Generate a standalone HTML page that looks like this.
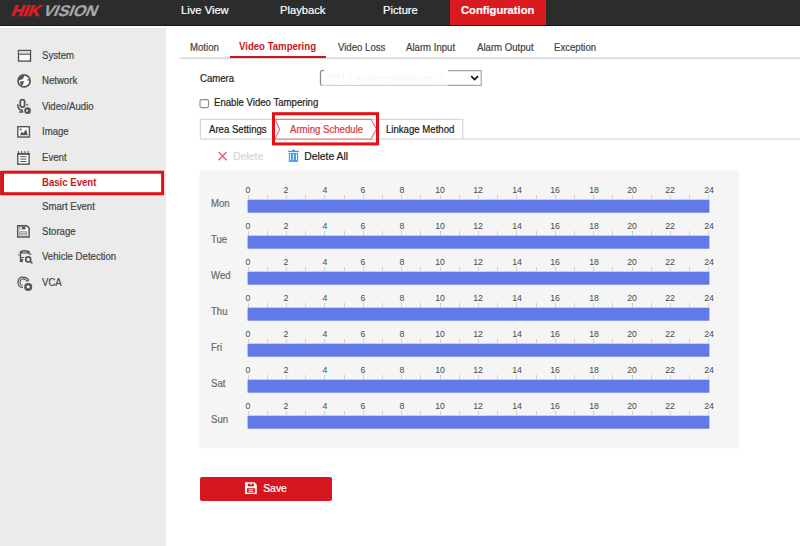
<!DOCTYPE html>
<html><head><meta charset="utf-8">
<style>
*{margin:0;padding:0;box-sizing:border-box}
html,body{width:800px;height:546px;overflow:hidden;background:#fff;font-family:"Liberation Sans",sans-serif;position:relative}
.abs{position:absolute}
.t{position:absolute;line-height:1;white-space:nowrap;-webkit-text-stroke:0.2px currentColor}
#hdr{position:absolute;left:0;top:0;width:800px;height:26px;background:#2c2c2c;border-bottom:1px solid #151515}
#logo{position:absolute;left:11px;top:0px;font-size:15.4px;line-height:21px;font-weight:bold;font-style:italic;white-space:nowrap}
#side{position:absolute;left:0;top:28px;width:166px;height:518px;background:#ebebeb}
.num{position:absolute;width:30px;text-align:center;font-size:9.5px;line-height:1;color:#4a4a4a;transform:scaleX(0.92)}
.tick{position:absolute;width:1px;height:4px;background:#d0d0d0}
.bar{position:absolute;left:247.5px;width:462px;height:13px;background:#6279e8}
svg{position:absolute;overflow:visible}
</style></head><body>
<div id="hdr">
  <div class="t" style="left:10.5px;top:2.6px;font-size:15.4px;font-weight:bold;color:#e31b23;transform:skewX(-22deg) scaleX(1.08);transform-origin:0 11px;-webkit-text-stroke:0.6px #e31b23">HIK</div>
  <div class="t" style="left:42.6px;top:2.6px;font-size:15.4px;font-weight:bold;color:#a8a8a8;transform:skewX(-22deg) scaleX(1.03);transform-origin:0 11px">VISION</div>
  <div class="abs" style="left:450px;top:0;width:96px;height:25px;background:#d91a21"></div>
<div class="t" style="left:181px;top:5px;font-size:11.2px;color:#fff;">Live View</div>
<div class="t" style="left:280px;top:5px;font-size:11.2px;color:#fff;">Playback</div>
<div class="t" style="left:383px;top:5px;font-size:11.2px;color:#fff;">Picture</div>
<div class="t" style="left:461px;top:5px;font-size:11.2px;color:#fff;font-weight:bold">Configuration</div>
</div>
<div id="side"></div>
<svg width="800" height="546" style="left:0;top:0"><rect x="2.5" y="172.2" width="160.1" height="21.5" fill="#fff" stroke="#e60f14" stroke-width="3"/><rect x="0" y="171" width="1.1" height="24" fill="#c42a30"/></svg>
<div class="t" style="left:41.5px;top:51px;font-size:10.0px;color:#444;transform:scaleX(0.9600);transform-origin:0 0;">System</div>
<div class="t" style="left:41.5px;top:76px;font-size:10.0px;color:#444;transform:scaleX(0.9600);transform-origin:0 0;">Network</div>
<div class="t" style="left:41.5px;top:102px;font-size:10.0px;color:#444;transform:scaleX(0.9600);transform-origin:0 0;">Video/Audio</div>
<div class="t" style="left:41.5px;top:127px;font-size:10.0px;color:#444;transform:scaleX(0.9600);transform-origin:0 0;">Image</div>
<div class="t" style="left:41.5px;top:153px;font-size:10.0px;color:#444;transform:scaleX(0.9600);transform-origin:0 0;">Event</div>
<div class="t" style="left:41.5px;top:178px;font-size:10.0px;color:#c8171e;transform:scaleX(0.9600);transform-origin:0 0;font-weight:bold;-webkit-text-stroke:0">Basic Event</div>
<div class="t" style="left:41.5px;top:202px;font-size:10.0px;color:#444;transform:scaleX(0.9600);transform-origin:0 0;">Smart Event</div>
<div class="t" style="left:41.5px;top:227px;font-size:10.0px;color:#444;transform:scaleX(0.9600);transform-origin:0 0;">Storage</div>
<div class="t" style="left:41.5px;top:252px;font-size:10.0px;color:#444;transform:scaleX(0.9600);transform-origin:0 0;">Vehicle Detection</div>
<div class="t" style="left:41.5px;top:278px;font-size:10.0px;color:#444;transform:scaleX(0.9600);transform-origin:0 0;">VCA</div>

<!-- subtabs -->
<svg width="800" height="546" style="left:0;top:0"><path d="M179.5 58.3 H800" stroke="#d6d6d6" stroke-width="1.4"/></svg>
<div class="abs" style="left:230px;top:56px;width:96px;height:2px;background:#c8171e"></div>

<svg width="800" height="546" style="left:0;top:0"><rect x="200" y="99.6" width="8.5" height="8" rx="1.6" fill="#fff" stroke="#8a8a8a" stroke-width="1.1"/></svg>

<!-- tabs -->
<svg width="800" height="546" style="left:0;top:0"><path d="M200.4 139 V119.3 H462.8 V139" fill="none" stroke="#d8d8d8" stroke-width="1.2"/><path d="M200 139.2 H800" stroke="#d8d8d8" stroke-width="1.3"/></svg>


<svg width="800" height="546" style="left:0;top:0"><rect x="199.5" y="170.5" width="539.5" height="278" fill="#f5f5f5"/></svg>
<div class="t" style="left:210.5px;top:199px;font-size:10.0px;color:#6a6a6a;transform:scaleX(0.9600);transform-origin:0 0;">Mon</div>
<div class="num" style="left:233.0px;top:185px">0</div>
<div class="num" style="left:271.4px;top:185px">2</div>
<div class="num" style="left:309.8px;top:185px">4</div>
<div class="num" style="left:348.2px;top:185px">6</div>
<div class="num" style="left:386.6px;top:185px">8</div>
<div class="num" style="left:425.0px;top:185px">10</div>
<div class="num" style="left:463.4px;top:185px">12</div>
<div class="num" style="left:501.8px;top:185px">14</div>
<div class="num" style="left:540.2px;top:185px">16</div>
<div class="num" style="left:578.6px;top:185px">18</div>
<div class="num" style="left:617.0px;top:185px">20</div>
<div class="num" style="left:655.4px;top:185px">22</div>
<div class="num" style="left:693.8px;top:185px">24</div>
<div class="tick" style="left:248px;top:195px"></div>
<div class="tick" style="left:267px;top:195px"></div>
<div class="tick" style="left:286px;top:195px"></div>
<div class="tick" style="left:305px;top:195px"></div>
<div class="tick" style="left:324px;top:195px"></div>
<div class="tick" style="left:344px;top:195px"></div>
<div class="tick" style="left:363px;top:195px"></div>
<div class="tick" style="left:382px;top:195px"></div>
<div class="tick" style="left:401px;top:195px"></div>
<div class="tick" style="left:420px;top:195px"></div>
<div class="tick" style="left:440px;top:195px"></div>
<div class="tick" style="left:459px;top:195px"></div>
<div class="tick" style="left:478px;top:195px"></div>
<div class="tick" style="left:497px;top:195px"></div>
<div class="tick" style="left:516px;top:195px"></div>
<div class="tick" style="left:536px;top:195px"></div>
<div class="tick" style="left:555px;top:195px"></div>
<div class="tick" style="left:574px;top:195px"></div>
<div class="tick" style="left:593px;top:195px"></div>
<div class="tick" style="left:612px;top:195px"></div>
<div class="tick" style="left:632px;top:195px"></div>
<div class="tick" style="left:651px;top:195px"></div>
<div class="tick" style="left:670px;top:195px"></div>
<div class="tick" style="left:689px;top:195px"></div>
<div class="tick" style="left:708px;top:195px"></div>
<div class="t" style="left:210.5px;top:235px;font-size:10.0px;color:#6a6a6a;transform:scaleX(0.9600);transform-origin:0 0;">Tue</div>
<div class="num" style="left:233.0px;top:221px">0</div>
<div class="num" style="left:271.4px;top:221px">2</div>
<div class="num" style="left:309.8px;top:221px">4</div>
<div class="num" style="left:348.2px;top:221px">6</div>
<div class="num" style="left:386.6px;top:221px">8</div>
<div class="num" style="left:425.0px;top:221px">10</div>
<div class="num" style="left:463.4px;top:221px">12</div>
<div class="num" style="left:501.8px;top:221px">14</div>
<div class="num" style="left:540.2px;top:221px">16</div>
<div class="num" style="left:578.6px;top:221px">18</div>
<div class="num" style="left:617.0px;top:221px">20</div>
<div class="num" style="left:655.4px;top:221px">22</div>
<div class="num" style="left:693.8px;top:221px">24</div>
<div class="tick" style="left:248px;top:231px"></div>
<div class="tick" style="left:267px;top:231px"></div>
<div class="tick" style="left:286px;top:231px"></div>
<div class="tick" style="left:305px;top:231px"></div>
<div class="tick" style="left:324px;top:231px"></div>
<div class="tick" style="left:344px;top:231px"></div>
<div class="tick" style="left:363px;top:231px"></div>
<div class="tick" style="left:382px;top:231px"></div>
<div class="tick" style="left:401px;top:231px"></div>
<div class="tick" style="left:420px;top:231px"></div>
<div class="tick" style="left:440px;top:231px"></div>
<div class="tick" style="left:459px;top:231px"></div>
<div class="tick" style="left:478px;top:231px"></div>
<div class="tick" style="left:497px;top:231px"></div>
<div class="tick" style="left:516px;top:231px"></div>
<div class="tick" style="left:536px;top:231px"></div>
<div class="tick" style="left:555px;top:231px"></div>
<div class="tick" style="left:574px;top:231px"></div>
<div class="tick" style="left:593px;top:231px"></div>
<div class="tick" style="left:612px;top:231px"></div>
<div class="tick" style="left:632px;top:231px"></div>
<div class="tick" style="left:651px;top:231px"></div>
<div class="tick" style="left:670px;top:231px"></div>
<div class="tick" style="left:689px;top:231px"></div>
<div class="tick" style="left:708px;top:231px"></div>
<div class="t" style="left:210.5px;top:271px;font-size:10.0px;color:#6a6a6a;transform:scaleX(0.9600);transform-origin:0 0;">Wed</div>
<div class="num" style="left:233.0px;top:257px">0</div>
<div class="num" style="left:271.4px;top:257px">2</div>
<div class="num" style="left:309.8px;top:257px">4</div>
<div class="num" style="left:348.2px;top:257px">6</div>
<div class="num" style="left:386.6px;top:257px">8</div>
<div class="num" style="left:425.0px;top:257px">10</div>
<div class="num" style="left:463.4px;top:257px">12</div>
<div class="num" style="left:501.8px;top:257px">14</div>
<div class="num" style="left:540.2px;top:257px">16</div>
<div class="num" style="left:578.6px;top:257px">18</div>
<div class="num" style="left:617.0px;top:257px">20</div>
<div class="num" style="left:655.4px;top:257px">22</div>
<div class="num" style="left:693.8px;top:257px">24</div>
<div class="tick" style="left:248px;top:267px"></div>
<div class="tick" style="left:267px;top:267px"></div>
<div class="tick" style="left:286px;top:267px"></div>
<div class="tick" style="left:305px;top:267px"></div>
<div class="tick" style="left:324px;top:267px"></div>
<div class="tick" style="left:344px;top:267px"></div>
<div class="tick" style="left:363px;top:267px"></div>
<div class="tick" style="left:382px;top:267px"></div>
<div class="tick" style="left:401px;top:267px"></div>
<div class="tick" style="left:420px;top:267px"></div>
<div class="tick" style="left:440px;top:267px"></div>
<div class="tick" style="left:459px;top:267px"></div>
<div class="tick" style="left:478px;top:267px"></div>
<div class="tick" style="left:497px;top:267px"></div>
<div class="tick" style="left:516px;top:267px"></div>
<div class="tick" style="left:536px;top:267px"></div>
<div class="tick" style="left:555px;top:267px"></div>
<div class="tick" style="left:574px;top:267px"></div>
<div class="tick" style="left:593px;top:267px"></div>
<div class="tick" style="left:612px;top:267px"></div>
<div class="tick" style="left:632px;top:267px"></div>
<div class="tick" style="left:651px;top:267px"></div>
<div class="tick" style="left:670px;top:267px"></div>
<div class="tick" style="left:689px;top:267px"></div>
<div class="tick" style="left:708px;top:267px"></div>
<div class="t" style="left:210.5px;top:307px;font-size:10.0px;color:#6a6a6a;transform:scaleX(0.9600);transform-origin:0 0;">Thu</div>
<div class="num" style="left:233.0px;top:293px">0</div>
<div class="num" style="left:271.4px;top:293px">2</div>
<div class="num" style="left:309.8px;top:293px">4</div>
<div class="num" style="left:348.2px;top:293px">6</div>
<div class="num" style="left:386.6px;top:293px">8</div>
<div class="num" style="left:425.0px;top:293px">10</div>
<div class="num" style="left:463.4px;top:293px">12</div>
<div class="num" style="left:501.8px;top:293px">14</div>
<div class="num" style="left:540.2px;top:293px">16</div>
<div class="num" style="left:578.6px;top:293px">18</div>
<div class="num" style="left:617.0px;top:293px">20</div>
<div class="num" style="left:655.4px;top:293px">22</div>
<div class="num" style="left:693.8px;top:293px">24</div>
<div class="tick" style="left:248px;top:303px"></div>
<div class="tick" style="left:267px;top:303px"></div>
<div class="tick" style="left:286px;top:303px"></div>
<div class="tick" style="left:305px;top:303px"></div>
<div class="tick" style="left:324px;top:303px"></div>
<div class="tick" style="left:344px;top:303px"></div>
<div class="tick" style="left:363px;top:303px"></div>
<div class="tick" style="left:382px;top:303px"></div>
<div class="tick" style="left:401px;top:303px"></div>
<div class="tick" style="left:420px;top:303px"></div>
<div class="tick" style="left:440px;top:303px"></div>
<div class="tick" style="left:459px;top:303px"></div>
<div class="tick" style="left:478px;top:303px"></div>
<div class="tick" style="left:497px;top:303px"></div>
<div class="tick" style="left:516px;top:303px"></div>
<div class="tick" style="left:536px;top:303px"></div>
<div class="tick" style="left:555px;top:303px"></div>
<div class="tick" style="left:574px;top:303px"></div>
<div class="tick" style="left:593px;top:303px"></div>
<div class="tick" style="left:612px;top:303px"></div>
<div class="tick" style="left:632px;top:303px"></div>
<div class="tick" style="left:651px;top:303px"></div>
<div class="tick" style="left:670px;top:303px"></div>
<div class="tick" style="left:689px;top:303px"></div>
<div class="tick" style="left:708px;top:303px"></div>
<div class="t" style="left:210.5px;top:343px;font-size:10.0px;color:#6a6a6a;transform:scaleX(0.9600);transform-origin:0 0;">Fri</div>
<div class="num" style="left:233.0px;top:329px">0</div>
<div class="num" style="left:271.4px;top:329px">2</div>
<div class="num" style="left:309.8px;top:329px">4</div>
<div class="num" style="left:348.2px;top:329px">6</div>
<div class="num" style="left:386.6px;top:329px">8</div>
<div class="num" style="left:425.0px;top:329px">10</div>
<div class="num" style="left:463.4px;top:329px">12</div>
<div class="num" style="left:501.8px;top:329px">14</div>
<div class="num" style="left:540.2px;top:329px">16</div>
<div class="num" style="left:578.6px;top:329px">18</div>
<div class="num" style="left:617.0px;top:329px">20</div>
<div class="num" style="left:655.4px;top:329px">22</div>
<div class="num" style="left:693.8px;top:329px">24</div>
<div class="tick" style="left:248px;top:339px"></div>
<div class="tick" style="left:267px;top:339px"></div>
<div class="tick" style="left:286px;top:339px"></div>
<div class="tick" style="left:305px;top:339px"></div>
<div class="tick" style="left:324px;top:339px"></div>
<div class="tick" style="left:344px;top:339px"></div>
<div class="tick" style="left:363px;top:339px"></div>
<div class="tick" style="left:382px;top:339px"></div>
<div class="tick" style="left:401px;top:339px"></div>
<div class="tick" style="left:420px;top:339px"></div>
<div class="tick" style="left:440px;top:339px"></div>
<div class="tick" style="left:459px;top:339px"></div>
<div class="tick" style="left:478px;top:339px"></div>
<div class="tick" style="left:497px;top:339px"></div>
<div class="tick" style="left:516px;top:339px"></div>
<div class="tick" style="left:536px;top:339px"></div>
<div class="tick" style="left:555px;top:339px"></div>
<div class="tick" style="left:574px;top:339px"></div>
<div class="tick" style="left:593px;top:339px"></div>
<div class="tick" style="left:612px;top:339px"></div>
<div class="tick" style="left:632px;top:339px"></div>
<div class="tick" style="left:651px;top:339px"></div>
<div class="tick" style="left:670px;top:339px"></div>
<div class="tick" style="left:689px;top:339px"></div>
<div class="tick" style="left:708px;top:339px"></div>
<div class="t" style="left:210.5px;top:379px;font-size:10.0px;color:#6a6a6a;transform:scaleX(0.9600);transform-origin:0 0;">Sat</div>
<div class="num" style="left:233.0px;top:365px">0</div>
<div class="num" style="left:271.4px;top:365px">2</div>
<div class="num" style="left:309.8px;top:365px">4</div>
<div class="num" style="left:348.2px;top:365px">6</div>
<div class="num" style="left:386.6px;top:365px">8</div>
<div class="num" style="left:425.0px;top:365px">10</div>
<div class="num" style="left:463.4px;top:365px">12</div>
<div class="num" style="left:501.8px;top:365px">14</div>
<div class="num" style="left:540.2px;top:365px">16</div>
<div class="num" style="left:578.6px;top:365px">18</div>
<div class="num" style="left:617.0px;top:365px">20</div>
<div class="num" style="left:655.4px;top:365px">22</div>
<div class="num" style="left:693.8px;top:365px">24</div>
<div class="tick" style="left:248px;top:375px"></div>
<div class="tick" style="left:267px;top:375px"></div>
<div class="tick" style="left:286px;top:375px"></div>
<div class="tick" style="left:305px;top:375px"></div>
<div class="tick" style="left:324px;top:375px"></div>
<div class="tick" style="left:344px;top:375px"></div>
<div class="tick" style="left:363px;top:375px"></div>
<div class="tick" style="left:382px;top:375px"></div>
<div class="tick" style="left:401px;top:375px"></div>
<div class="tick" style="left:420px;top:375px"></div>
<div class="tick" style="left:440px;top:375px"></div>
<div class="tick" style="left:459px;top:375px"></div>
<div class="tick" style="left:478px;top:375px"></div>
<div class="tick" style="left:497px;top:375px"></div>
<div class="tick" style="left:516px;top:375px"></div>
<div class="tick" style="left:536px;top:375px"></div>
<div class="tick" style="left:555px;top:375px"></div>
<div class="tick" style="left:574px;top:375px"></div>
<div class="tick" style="left:593px;top:375px"></div>
<div class="tick" style="left:612px;top:375px"></div>
<div class="tick" style="left:632px;top:375px"></div>
<div class="tick" style="left:651px;top:375px"></div>
<div class="tick" style="left:670px;top:375px"></div>
<div class="tick" style="left:689px;top:375px"></div>
<div class="tick" style="left:708px;top:375px"></div>
<div class="t" style="left:210.5px;top:415px;font-size:10.0px;color:#6a6a6a;transform:scaleX(0.9600);transform-origin:0 0;">Sun</div>
<div class="num" style="left:233.0px;top:401px">0</div>
<div class="num" style="left:271.4px;top:401px">2</div>
<div class="num" style="left:309.8px;top:401px">4</div>
<div class="num" style="left:348.2px;top:401px">6</div>
<div class="num" style="left:386.6px;top:401px">8</div>
<div class="num" style="left:425.0px;top:401px">10</div>
<div class="num" style="left:463.4px;top:401px">12</div>
<div class="num" style="left:501.8px;top:401px">14</div>
<div class="num" style="left:540.2px;top:401px">16</div>
<div class="num" style="left:578.6px;top:401px">18</div>
<div class="num" style="left:617.0px;top:401px">20</div>
<div class="num" style="left:655.4px;top:401px">22</div>
<div class="num" style="left:693.8px;top:401px">24</div>
<div class="tick" style="left:248px;top:411px"></div>
<div class="tick" style="left:267px;top:411px"></div>
<div class="tick" style="left:286px;top:411px"></div>
<div class="tick" style="left:305px;top:411px"></div>
<div class="tick" style="left:324px;top:411px"></div>
<div class="tick" style="left:344px;top:411px"></div>
<div class="tick" style="left:363px;top:411px"></div>
<div class="tick" style="left:382px;top:411px"></div>
<div class="tick" style="left:401px;top:411px"></div>
<div class="tick" style="left:420px;top:411px"></div>
<div class="tick" style="left:440px;top:411px"></div>
<div class="tick" style="left:459px;top:411px"></div>
<div class="tick" style="left:478px;top:411px"></div>
<div class="tick" style="left:497px;top:411px"></div>
<div class="tick" style="left:516px;top:411px"></div>
<div class="tick" style="left:536px;top:411px"></div>
<div class="tick" style="left:555px;top:411px"></div>
<div class="tick" style="left:574px;top:411px"></div>
<div class="tick" style="left:593px;top:411px"></div>
<div class="tick" style="left:612px;top:411px"></div>
<div class="tick" style="left:632px;top:411px"></div>
<div class="tick" style="left:651px;top:411px"></div>
<div class="tick" style="left:670px;top:411px"></div>
<div class="tick" style="left:689px;top:411px"></div>
<div class="tick" style="left:708px;top:411px"></div>
<svg width="800" height="546" style="left:0;top:0"><g fill="#6279e8"><rect x="247.6" y="199.7" width="461.8" height="13"/><rect x="247.6" y="235.7" width="461.8" height="13"/><rect x="247.6" y="271.7" width="461.8" height="13"/><rect x="247.6" y="307.7" width="461.8" height="13"/><rect x="247.6" y="343.7" width="461.8" height="13"/><rect x="247.6" y="379.7" width="461.8" height="13"/><rect x="247.6" y="415.7" width="461.8" height="13"/></g></svg>

<div class="abs" style="left:200px;top:477px;width:132px;height:24px;background:#d7171f;border-radius:2px"></div>

<svg width="800" height="546" style="left:0;top:0" viewBox="0 0 800 546">
<g fill="none" stroke="#555" stroke-width="1.4">
 <!-- system -->
 <rect x="18.5" y="50.5" width="12" height="10.6" fill="#fafafa"/>
 <rect x="19.2" y="51.2" width="10.6" height="2.6" fill="#ddd" stroke="none"/>
 <line x1="18.5" y1="54.2" x2="30.5" y2="54.2" stroke-width="1.1"/>
 <!-- globe -->
 <circle cx="24.1" cy="80.95" r="6.0" fill="#fff" stroke-width="1.7"/>
 <!-- video/audio -->
 <rect x="20.3" y="99.6" width="4.3" height="7.6" rx="2.15" fill="#fff" stroke-width="1.8"/>
 <path d="M17.7 104.2 C17.7 108.3 19.3 110 22 110 V111.8 M19.1 111.9 H23.2" stroke-width="1.5"/>
 <!-- image -->
 <rect x="17.8" y="126.7" width="11.6" height="10.3" fill="#fff"/>
 <!-- event -->
 <rect x="17.8" y="153.7" width="11.3" height="10.5" fill="#fff"/>
 <line x1="20.2" y1="156.7" x2="26.4" y2="156.7" stroke-width="1"/>
 <line x1="20.2" y1="159.1" x2="26.4" y2="159.1" stroke-width="1"/>
 <line x1="20.2" y1="161.5" x2="26.4" y2="161.5" stroke-width="1"/>
 <!-- storage -->
 <path d="M17.7 225.8 H26.8 L29.1 228.1 V237.1 H17.7 Z" fill="#fff" stroke-width="1.5"/>
 <rect x="19.2" y="231.2" width="8" height="4.4" fill="#999" stroke="none"/>
 <!-- vehicle -->
 <path d="M20.5 252.5 V262" stroke-width="1.4"/><path d="M29.2 252.5 V254.6" stroke-width="1.2"/>
 <path d="M18.1 254.3 L19.6 255.9 M29.5 254.4 L31.5 254.2" stroke-width="1"/>
 <circle cx="28.2" cy="259.4" r="2.45" fill="#f4f4f4" stroke-width="1.7"/>
 <line x1="30.2" y1="261.3" x2="32.5" y2="263.3" stroke-width="1.6"/>
 <!-- vca -->
 <path d="M22.8 287.3 C19.5 287.6 17.7 285 18 282 C18.3 279.3 19.6 277.4 21.6 277.1 C24.2 276.8 27.6 278 28.5 279.7 C28.9 280.6 27.6 281.1 26 280.7" stroke-width="1.25"/>
 <path d="M22.6 285.6 C20.7 285.3 19.9 283.5 20.1 281.6 C20.3 280 21.1 279 22.4 278.9 C23.9 278.8 25.2 279.4 26.2 280.2" stroke-width="1.05"/>
</g>
<g fill="#555">
 <path d="M17.8 79.2 L19.5 75.9 L23.9 74.6 L23.9 76.8 L23 78.9 L21.9 79.2 L20.4 80 L18 80.6 Z"/>
 <path d="M20.1 81.2 L24.2 81.2 L23.6 82.7 L22.7 85.3 L21.9 85.6 L20.4 83.8 Z"/>
 <path d="M26.5 79.7 L29.8 78.9 L30.1 80.6 L27.1 80.6 Z"/>
 <circle cx="27.2" cy="104.8" r="0.9"/>
 <circle cx="27.55" cy="110.65" r="3.3"/>
 <circle cx="20.6" cy="129.4" r="1"/>
 <path d="M19.9 135.2 L21.8 131.6 L23.1 133.2 L26.1 129.2 L27.8 135.2 Z"/>
 <rect x="18" y="151.1" width="1.1" height="2.6"/>
 <rect x="21.2" y="151.1" width="1.1" height="2.6"/>
 <rect x="24.4" y="151.1" width="1.1" height="2.6"/>
 <rect x="27.6" y="151.1" width="1.1" height="2.6"/>
 <rect x="17.1" y="153" width="12.7" height="1.8"/>
 <path d="M19.4 226.5 H25.5 V229.4 H19.4 Z"/>
 <path d="M19.8 253.4 V251.7 Q20.5 250.1 24.7 250.1 Q29 250.1 29.8 251.7 V253.4 Z"/>
 <path d="M20.3 256.9 H24.2 V258.1 H20.3 Z M20.6 259 H23.4 L22.6 262.2 H20.6 Z"/>
 <circle cx="28.2" cy="286.9" r="4"/>
</g>
<rect x="22.3" y="251.3" width="4.6" height="1.4" fill="#9a9a9a"/>
<rect x="20.1" y="227.1" width="1.8" height="1.9" fill="#fff"/>
<path d="M26.3 109.2 L28.6 110.65 L26.3 112.1 Z" fill="#fff"/>
<rect x="20.2" y="232.3" width="5.8" height="0.8" fill="#ddd"/>
<rect x="20.2" y="233.9" width="5.8" height="0.8" fill="#ddd"/>
<path d="M28.2 284.4 L28.95 285.9 L30.55 286.05 L29.35 287.1 L29.75 288.7 L28.2 287.85 L26.65 288.7 L27.05 287.1 L25.85 286.05 L27.45 285.9 Z" fill="#fff"/>

<!-- delete x -->
<path d="M218.6 152 L226.6 160.2 M226.6 152 L218.6 160.2" stroke="#e8656b" stroke-width="1.5" fill="none"/>
<!-- trash -->
<g fill="#4596e4">
 <rect x="287.9" y="150.8" width="11.1" height="1.3"/>
 <rect x="291.9" y="149.8" width="3.1" height="1.2"/>
 <rect x="288.8" y="153" width="9.3" height="8.9"/>
</g>
<g fill="#fff">
 <rect x="289.9" y="153.9" width="1" height="6.4"/>
 <rect x="292.8" y="153.9" width="1" height="6.4"/>
 <rect x="295.9" y="153.9" width="1" height="6.4"/>
</g>
<!-- save icon -->
<path d="M245 482.3 H254.5 L256.8 484.7 V494 H245 Z" fill="#fff"/>
<rect x="247.8" y="483.6" width="6.2" height="2.7" fill="#d81920"/>
<rect x="250.2" y="483.4" width="1.6" height="1.2" fill="#fff"/>
<rect x="247" y="488.2" width="8.1" height="4.5" fill="#d81920"/>
<rect x="248.6" y="489.4" width="4.7" height="0.9" fill="#fff"/>
<rect x="248.6" y="491" width="4.7" height="0.9" fill="#fff"/>

<!-- select -->
<path d="M324 70.6 H322 Q320.5 70.6 320.5 72.1 V83.8 Q320.5 85.3 322 85.3" stroke="#8c8c8c" stroke-width="1.3" fill="none"/>
<path d="M322 85.3 H448" stroke="#c8c8c8" stroke-width="1" fill="none"/>
<path d="M448 70.6 H481.2 V85.3 H448" stroke="#a8a8a8" stroke-width="1.2" fill="none"/>
<path d="M471.2 76.2 L474.6 79.6 L478 76.2" stroke="#111" stroke-width="1.7" fill="none"/>

<!-- arming tab -->
<path d="M275 119.3 H371 L376.5 129.2 L371 139 H275 L279.6 129.2 Z" stroke="#e07f85" stroke-width="1.25" fill="#fff"/>
</svg>
<div class="t" style="left:189.5px;top:43px;font-size:10.0px;color:#444;transform:scaleX(0.9600);transform-origin:0 0;">Motion</div>
<div class="t" style="left:239.2px;top:42px;font-size:10.0px;color:#c8171e;transform:scaleX(0.9600);transform-origin:0 0;font-weight:bold;-webkit-text-stroke:0">Video Tampering</div>
<div class="t" style="left:337.5px;top:43px;font-size:10.0px;color:#444;transform:scaleX(0.9600);transform-origin:0 0;">Video Loss</div>
<div class="t" style="left:406px;top:43px;font-size:10.0px;color:#444;transform:scaleX(0.9600);transform-origin:0 0;">Alarm Input</div>
<div class="t" style="left:476.7px;top:43px;font-size:10.0px;color:#444;transform:scaleX(0.9600);transform-origin:0 0;">Alarm Output</div>
<div class="t" style="left:553.5px;top:43px;font-size:10.0px;color:#444;transform:scaleX(0.9600);transform-origin:0 0;">Exception</div>
<div class="t" style="left:200px;top:74px;font-size:10.0px;color:#222;transform:scaleX(0.9600);transform-origin:0 0;">Camera</div>
<div class="t" style="left:214px;top:98px;font-size:10.0px;color:#222;transform:scaleX(0.9600);transform-origin:0 0;">Enable Video Tampering</div>
<div class="t" style="left:208.8px;top:125px;font-size:10.0px;color:#1a1a1a;transform:scaleX(0.9600);transform-origin:0 0;">Area Settings</div>
<div class="t" style="left:289.8px;top:125px;font-size:10.0px;color:#d23a44;transform:scaleX(0.9600);transform-origin:0 0;">Arming Schedule</div>
<div class="t" style="left:386.3px;top:125px;font-size:10.0px;color:#1a1a1a;transform:scaleX(0.9600);transform-origin:0 0;">Linkage Method</div>
<div class="t" style="left:233.2px;top:152px;font-size:10.4px;color:#d6d6d6;">Delete</div>
<div class="t" style="left:304.2px;top:152px;font-size:10.4px;color:#1a1a1a;">Delete All</div>
<div class="t" style="left:263.2px;top:484px;font-size:10.4px;color:#fff;">Save</div>
<div class="t" style="left:327.7px;top:74px;font-size:10.4px;color:#f6f6f6;-webkit-text-stroke:0">D11 Lackiererei/Rinnen 2</div>
<svg width="800" height="546" style="left:0;top:0"><rect x="273.5" y="113.7" width="104" height="30.2" fill="none" stroke="#e60f14" stroke-width="3"/></svg>
</body></html>
